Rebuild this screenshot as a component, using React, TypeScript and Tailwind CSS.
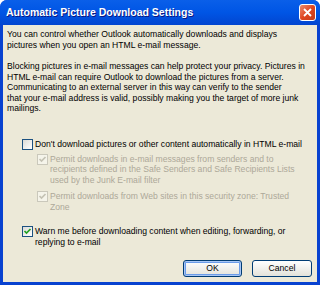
import React from "react";

const Check = ({ checked, disabled }: { checked: boolean; disabled?: boolean }) => (
  <span
    className={`flex h-[11px] w-[11px] shrink-0 items-center justify-center border ${
      disabled
        ? "border-[#cac8bb] bg-[#f5f4ea]"
        : "border-[#1c5180] bg-gradient-to-br from-[#dcdcd7] to-white"
    }`}
  >
    {checked && (
      <svg width="9" height="9" viewBox="0 0 9 9">
        <path
          d="M1.5 4 L3.5 6 L7.5 2"
          fill="none"
          stroke={disabled ? "#c4c2b4" : "#21a121"}
          strokeWidth="1.7"
        />
      </svg>
    )}
  </span>
);

export default function App() {
  return (
    <div className="flex h-[285px] w-[320px] flex-col overflow-hidden rounded-t-[7px] bg-[#0842d0] font-['Liberation_Sans',Arial,sans-serif]">
      {/* Title bar */}
      <div className="flex h-[25px] shrink-0 items-center justify-between bg-gradient-to-b from-[#0a5fe9] via-[#0055e5] to-[#0245d0] pl-[6px] pr-[4px]">
        <span className="text-[10.5px] font-bold text-white [text-shadow:1px_1px_0_#0a1883]">
          Automatic Picture Download Settings
        </span>
        <div className="flex h-[17px] w-[17px] items-center justify-center rounded-[3px] border border-white bg-gradient-to-br from-[#e98a6c] via-[#e0461f] to-[#c63b1a]">
          <svg width="9" height="9" viewBox="0 0 9 9">
            <path d="M1 1 L8 8 M8 1 L1 8" stroke="white" strokeWidth="1.8" />
          </svg>
        </div>
      </div>

      {/* Body */}
      <div className="mx-[3px] mb-[3px] flex flex-1 flex-col bg-[#ece9d8] px-[4px] pt-[4px] text-[8.6px] leading-[11px] text-black">
        <p className="whitespace-nowrap">
          You can control whether Outlook automatically downloads and displays
          <br />
          pictures when you open an HTML e-mail message.
        </p>
        <p className="mt-[10px] whitespace-nowrap leading-[10.5px]">
          Blocking pictures in e-mail messages can help protect your privacy. Pictures in
          <br />
          HTML e-mail can require Outlook to download the pictures from a server.
          <br />
          Communicating to an external server in this way can verify to the sender
          <br />
          that your e-mail address is valid, possibly making you the target of more junk
          <br />
          mailings.
        </p>

        <div className="mt-[25px] flex items-center gap-[2px] pl-[15px]">
          <Check checked={false} />
          <span className="whitespace-nowrap">
            Don't download pictures or other content automatically in HTML e-mail
          </span>
        </div>

        <div className="mt-[4px] flex items-start gap-[2px] pl-[30px] text-[#aca899]">
          <div className="pt-[0px]">
            <Check checked disabled />
          </div>
          <span className="whitespace-nowrap leading-[10.5px]">
            Permit downloads in e-mail messages from senders and to
            <br />
            recipients defined in the Safe Senders and Safe Recipients Lists
            <br />
            used by the Junk E-mail filter
          </span>
        </div>

        <div className="mt-[6px] flex items-start gap-[2px] pl-[30px] text-[#aca899]">
          <div className="pt-[0px]">
            <Check checked disabled />
          </div>
          <span className="whitespace-nowrap leading-[10.5px]">
            Permit downloads from Web sites in this security zone: Trusted
            <br />
            Zone
          </span>
        </div>

        <div className="mt-[14px] flex items-start gap-[2px] pl-[15px]">
          <div className="pt-[0px]">
            <Check checked />
          </div>
          <span className="whitespace-nowrap leading-[10.5px]">
            Warn me before downloading content when editing, forwarding, or
            <br />
            replying to e-mail
          </span>
        </div>

        <div className="mt-auto mb-[5px] flex justify-end gap-[10px] pr-[1px]">
          <button className="h-[17px] w-[59px] rounded-[3px] border border-[#003c74] bg-gradient-to-b from-white to-[#e3e2da] text-[8.6px] shadow-[inset_0_0_0_1px_#a8c6f5,inset_0_0_0_2px_#6b9ce9]">
            OK
          </button>
          <button className="h-[17px] w-[60px] rounded-[3px] border border-[#003c74] bg-gradient-to-b from-white to-[#e3e2da] text-[8.6px]">
            Cancel
          </button>
        </div>
      </div>
    </div>
  );
}
